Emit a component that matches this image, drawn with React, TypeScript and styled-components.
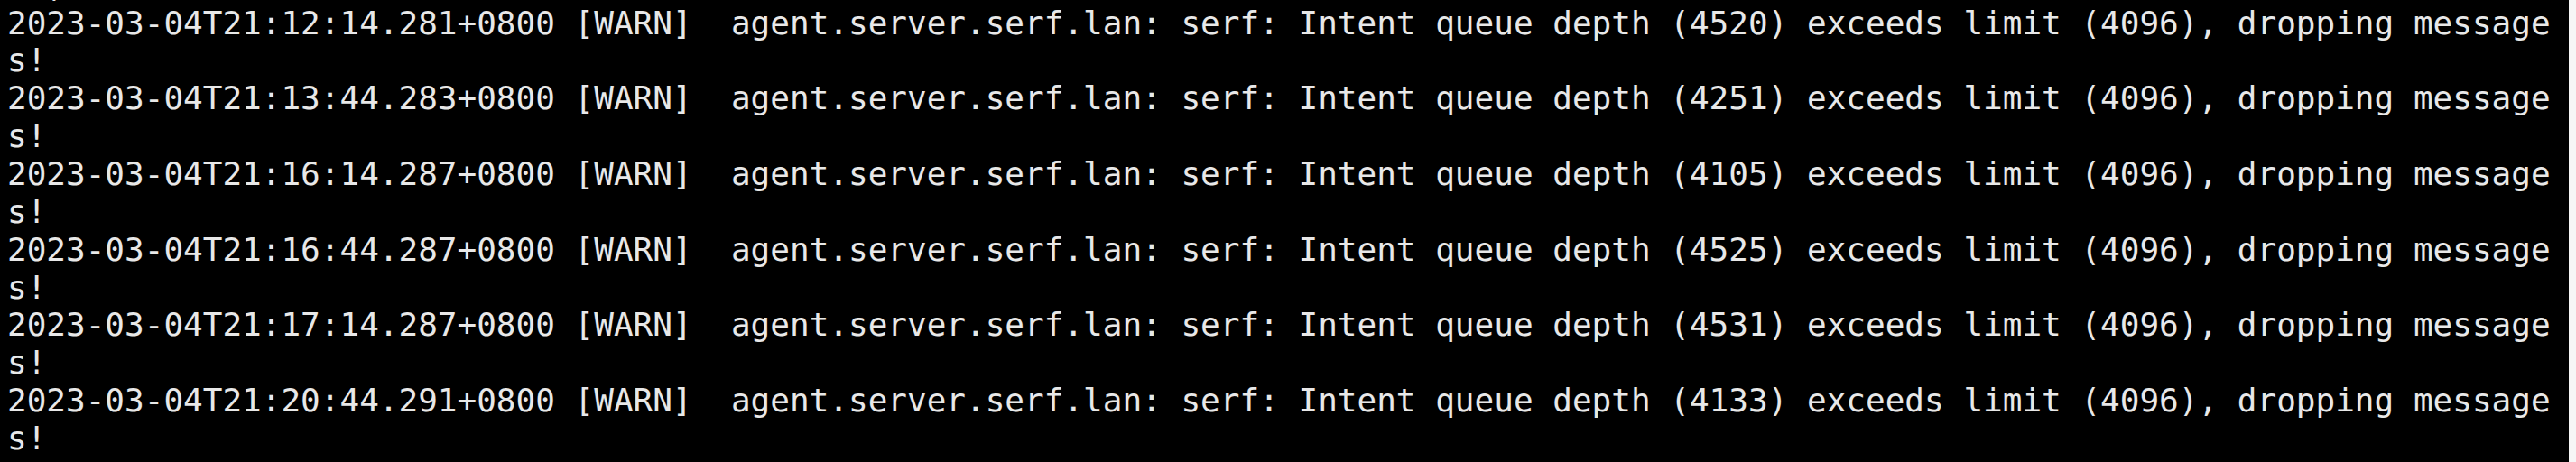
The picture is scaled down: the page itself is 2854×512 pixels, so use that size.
import React from "react";
import styled, { createGlobalStyle } from "styled-components";

const GlobalStyle = createGlobalStyle`
  html, body {
    margin: 0;
    padding: 0;
    background: #f6f6f6;
    overflow: hidden;
  }
`;

const Page = styled.div`
  display: flex;
  width: 2854px;
  height: 512px;
  background: #f6f6f6;
`;

const Terminal = styled.div`
  width: 2846px;
  height: 512px;
  background: #000000;
  overflow: hidden;
  padding-left: 8px;
  box-sizing: border-box;
`;

const Scrollback = styled.div`
  margin-top: -37.3px;
  display: flex;
  flex-direction: column;
`;

const Line = styled.div`
  font-family: "DejaVu Sans Mono", "Liberation Mono", monospace;
  font-size: 36px;
  line-height: 41.86px;
  height: 41.86px;
  color: #e8e8e8;
  white-space: pre;
`;

const entries = [
  { ts: "2023-03-04T21:12:14.281+0800", depth: 4520 },
  { ts: "2023-03-04T21:13:44.283+0800", depth: 4251 },
  { ts: "2023-03-04T21:16:14.287+0800", depth: 4105 },
  { ts: "2023-03-04T21:16:44.287+0800", depth: 4525 },
  { ts: "2023-03-04T21:17:14.287+0800", depth: 4531 },
  { ts: "2023-03-04T21:20:44.291+0800", depth: 4133 },
  { ts: "2023-03-04T21:21:14.292+0800", depth: 4210 },
];

const msg = (ts: string, depth: number) =>
  `${ts} [WARN]  agent.server.serf.lan: serf: Intent queue depth (${depth}) exceeds limit (4096), dropping message`;

export default function App() {
  return (
    <>
      <GlobalStyle />
      <Page>
        <Terminal>
          <Scrollback>
            <Line>{"  ,"}</Line>
            {entries.map((e) => (
              <React.Fragment key={e.ts}>
                <Line>{msg(e.ts, e.depth)}</Line>
                <Line>s!</Line>
              </React.Fragment>
            ))}
          </Scrollback>
        </Terminal>
      </Page>
    </>
  );
}
